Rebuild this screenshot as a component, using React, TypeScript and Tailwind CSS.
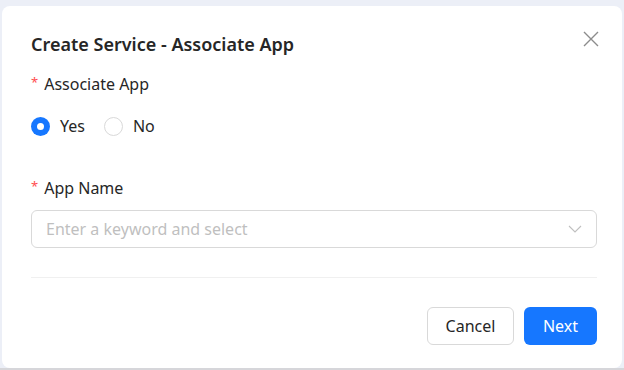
import React, { useState } from 'react';

const Required: React.FC<{ label: string }> = ({ label }) => (
  <div className="flex items-center h-[22px] text-[16px] text-[#262626]">
    <span className="text-[#ff4d4f] mr-[6px] text-[13px] leading-none -mt-[3px]">*</span>
    <span>{label}</span>
  </div>
);

const Radio: React.FC<{ checked: boolean; label: string; onClick: () => void }> = ({ checked, label, onClick }) => (
  <label className="flex items-center h-[24px] cursor-pointer" onClick={onClick}>
    <span
      className={
        checked
          ? 'w-[19px] h-[19px] rounded-full bg-[#1677ff] flex items-center justify-center'
          : 'w-[19px] h-[19px] rounded-full border border-[#d9d9d9] bg-white'
      }
    >
      {checked && <span className="w-[7px] h-[7px] rounded-full bg-white" />}
    </span>
    <span className="ml-[10px] text-[16px] leading-[24px] text-[#262626]">{label}</span>
  </label>
);

const App: React.FC = () => {
  const [associate, setAssociate] = useState(true);

  return (
    <div className="w-[624px] h-[370px] bg-[#eceff7] pt-[6px] pl-[2px] pr-[2px] border-b-[2px] border-[#d6d6da] font-['Noto_Sans',sans-serif]">
      <div className="h-full bg-white rounded-[8px] pl-[29px] pr-[23px] flex flex-col">
        {/* Header */}
        <div className="flex items-start justify-between pt-[25px]">
          <h2 className="text-[18px] font-semibold text-[#262626] leading-[26px]">Create Service - Associate App</h2>
          <button className="text-[#8c8c8c]">
            <svg width="16" height="16" viewBox="0 0 16 16" fill="none" stroke="currentColor" strokeWidth="1.4">
              <path d="M1 1l14 14M15 1L1 15" />
            </svg>
          </button>
        </div>

        {/* Associate App */}
        <div className="mt-[16px] pr-[2px]">
          <Required label="Associate App" />
          <div className="flex items-center gap-[19px] mt-[19px]">
            <Radio checked={associate} label="Yes" onClick={() => setAssociate(true)} />
            <Radio checked={!associate} label="No" onClick={() => setAssociate(false)} />
          </div>
        </div>

        {/* App Name */}
        <div className="mt-[39px] pr-[2px]">
          <Required label="App Name" />
          <div className="mt-[11px] h-[38px] border border-[#d9d9d9] rounded-[6px] flex items-center justify-between pl-[14px] pr-[14px]">
            <span className="text-[16px] text-[#bfbfbf]">Enter a keyword and select</span>
            <svg width="14" height="14" viewBox="0 0 14 14" fill="none" stroke="#bfbfbf" strokeWidth="1.1">
              <path d="M1 4l6 6 6-6" />
            </svg>
          </div>
        </div>

        <div className="mt-[29px] mr-[2px] h-px bg-[#f0f0f0]" />

        {/* Footer */}
        <div className="flex justify-end gap-[10px] mt-[29px] pr-[2px]">
          <button className="h-[38px] w-[87px] border border-[#d9d9d9] rounded-[6px] text-[16px] text-[#262626] bg-white">
            Cancel
          </button>
          <button className="h-[38px] w-[73px] rounded-[6px] text-[16px] text-white bg-[#1677ff]">Next</button>
        </div>
      </div>
    </div>
  );
};

export default App;
